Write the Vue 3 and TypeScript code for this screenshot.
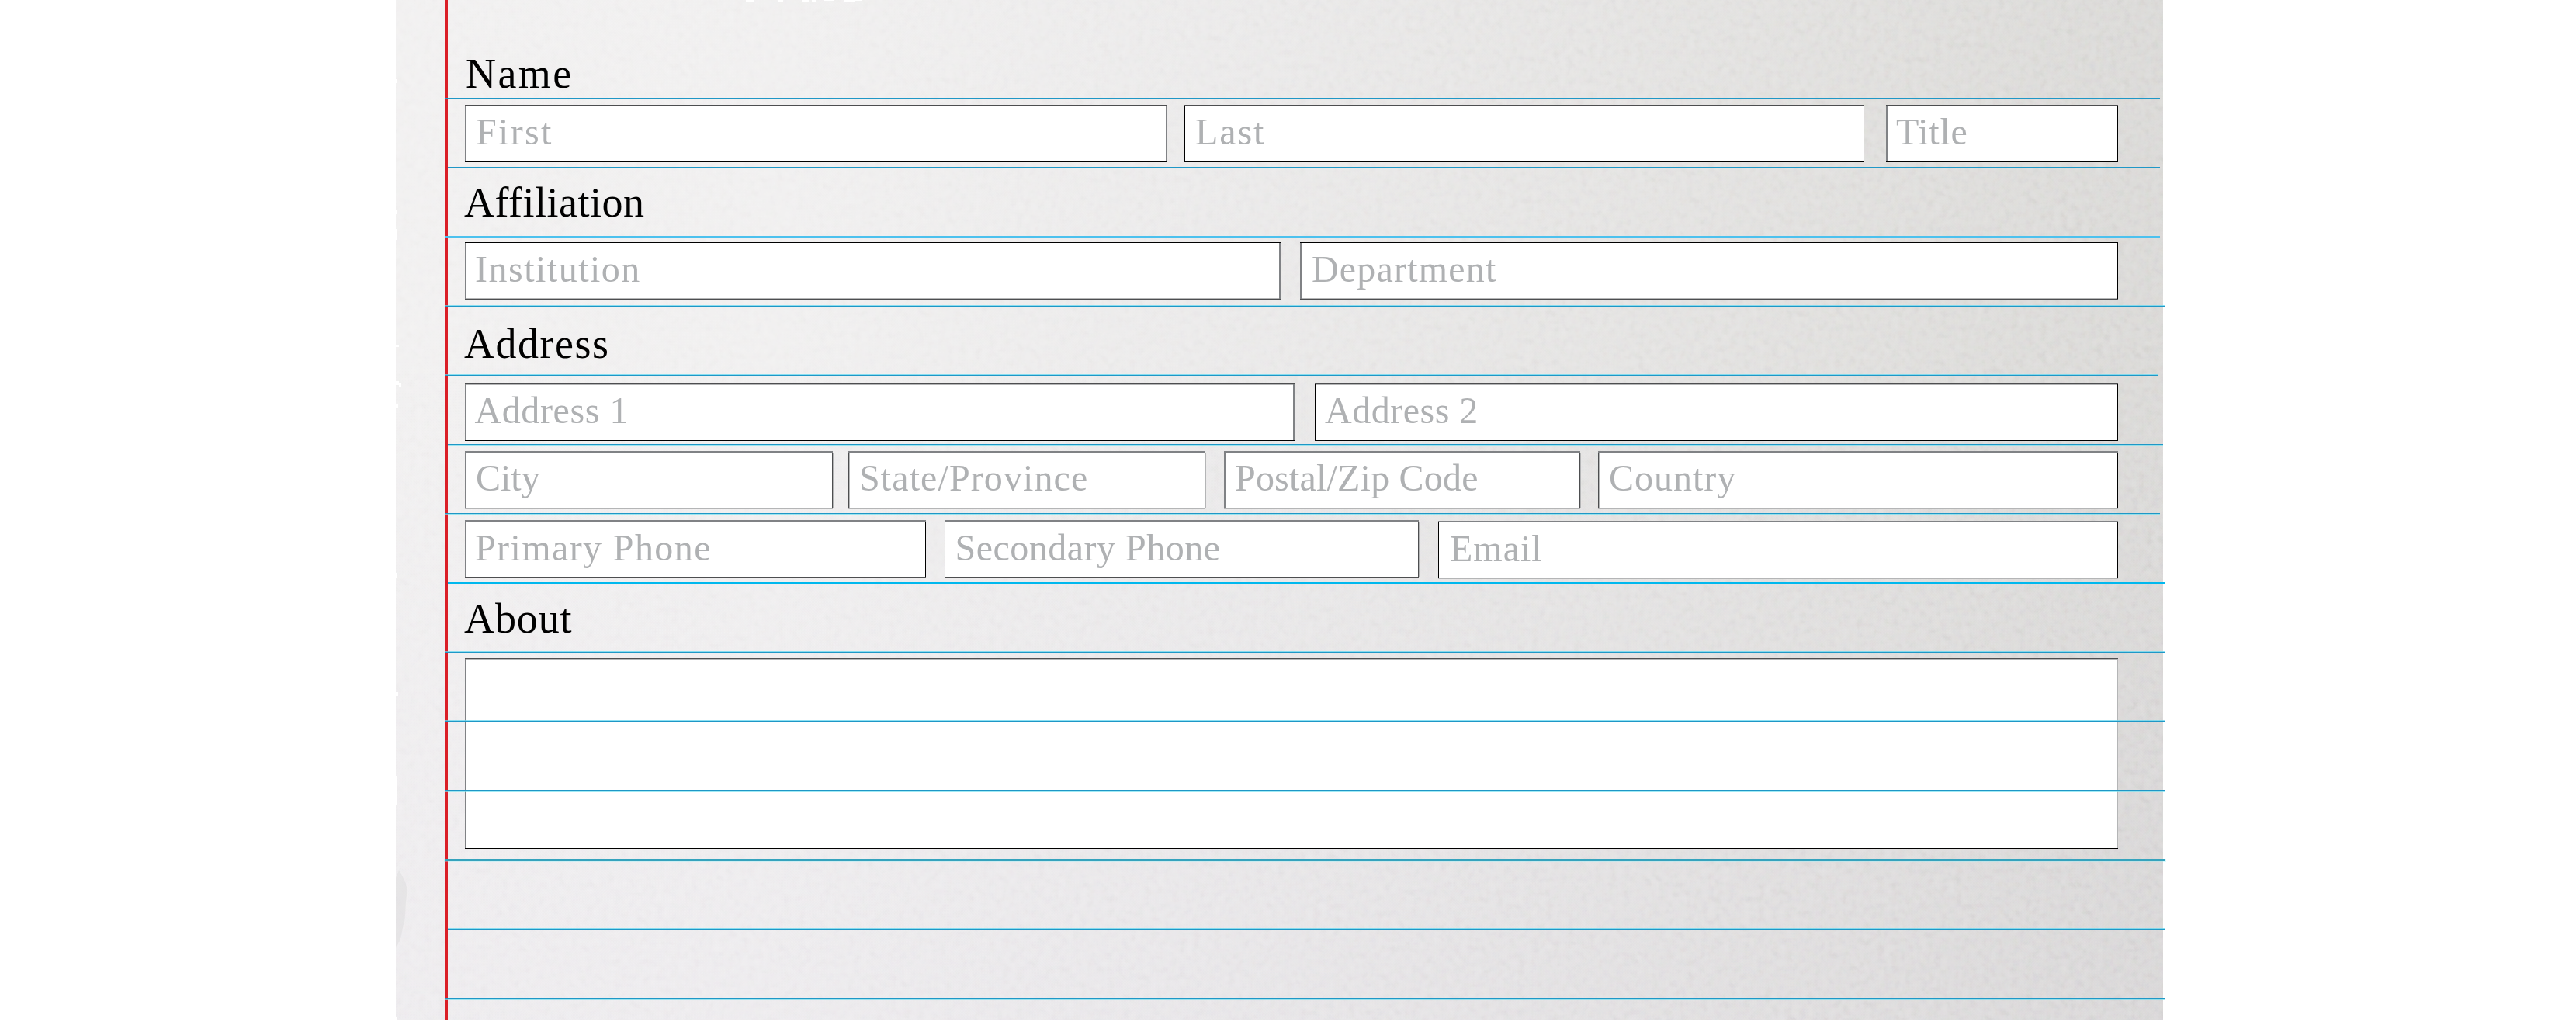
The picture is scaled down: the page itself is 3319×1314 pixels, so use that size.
<script setup lang="ts">
type Edge = 'thin' | 'soft' | 'mixed'

interface Field {
  label: string
  left: Edge
  right: Edge
  inset: number
  tracking: number
}

interface Row {
  name: string
  heading?: string
  headingTracking?: number
  fields: Field[]
}

const field = (label: string, left: Edge, right: Edge, inset: number, tracking: number): Field => ({
  label,
  left,
  right,
  inset,
  tracking,
})

const rows: Row[] = [
  {
    name: 'person',
    heading: 'Name',
    headingTracking: 2.4,
    fields: [
      field('First', 'soft', 'soft', 12, 2.3),
      field('Last', 'thin', 'thin', 13, 1.9),
      field('Title', 'soft', 'thin', 11, 0.7),
    ],
  },
  {
    name: 'affiliation',
    heading: 'Affiliation',
    headingTracking: 0.5,
    fields: [
      field('Institution', 'soft', 'soft', 11, 1.5),
      field('Department', 'soft', 'thin', 13, 1.2),
    ],
  },
  {
    name: 'street',
    heading: 'Address',
    headingTracking: 1.5,
    fields: [
      field('Address 1', 'soft', 'soft', 10.5, 0.6),
      field('Address 2', 'thin', 'thin', 12, 0.5),
    ],
  },
  {
    name: 'region',
    fields: [
      field('City', 'soft', 'mixed', 12, 0),
      field('State/Province', 'mixed', 'mixed', 13, 1.1),
      field('Postal/Zip Code', 'soft', 'mixed', 12, 0.2),
      field('Country', 'mixed', 'thin', 13, 1),
    ],
  },
  {
    name: 'contact',
    fields: [
      field('Primary Phone', 'soft', 'thin', 11, 1.4),
      field('Secondary Phone', 'thin', 'mixed', 12.5, 0.5),
      field('Email', 'thin', 'thin', 14, 1),
    ],
  },
]

interface Rule {
  y: number
  x: number
  end: number
  kind: string
}

const rules: Rule[] = [
  { y: 126, x: 573, end: 2783, kind: 'dark-light' },
  { y: 215, x: 577, end: 2783, kind: 'dark-light' },
  { y: 304, x: 573, end: 2783, kind: 'sky' },
  { y: 393, x: 573, end: 2790, kind: 'light-dark' },
  { y: 482, x: 573, end: 2781, kind: 'light-dark' },
  { y: 572, x: 577, end: 2787, kind: 'dark-light' },
  { y: 661, x: 573, end: 2783, kind: 'dark-light' },
  { y: 750, x: 577, end: 2790, kind: 'bright' },
  { y: 839, x: 573, end: 2790, kind: 'light-dark' },
  { y: 928, x: 573, end: 2790, kind: 'light-dark' },
  { y: 1018, x: 573, end: 2790, kind: 'dark-light' },
  { y: 1107, x: 573, end: 2790, kind: 'teal' },
  { y: 1196, x: 577, end: 2790, kind: 'light-dark' },
  { y: 1286, x: 573, end: 2790, kind: 'dark-light' },
]
</script>

<template>
  <main class="page">
    <div class="sheet">
      <svg class="grain" width="2277" height="1314" aria-hidden="true">
        <filter id="grain" x="0" y="0" width="100%" height="100%" color-interpolation-filters="sRGB">
          <feTurbulence type="fractalNoise" baseFrequency="0.11" numOctaves="4" seed="21" />
          <feColorMatrix
            values="1 0.5 0.5 0 -0.5  0.5 1 0.5 0 -0.5  0.5 0.5 1 0 -0.5  0 0 0 0 1"
          />
        </filter>
        <rect width="2277" height="1314" filter="url(#grain)" />
      </svg>
      <svg class="wear" width="2277" height="1314" aria-hidden="true">
        <path
          d="M451 0h10v2h-10zM493 0h6v3h-6zM523 0h9v3h-9zM536 0h5v2h-5zM552 0h12v1h-12zM578 0h22v1h-8v2h-5v-1h-9zM0 102h2v5H0zM0 270h1v6H0zM0 295h2v14H0zM0 444h4v3H0zM0 491h4v3h3v4H4v-2H0zM0 520h3v5H0zM0 738h2v6H0zM0 891h3v5H0zM0 1000h2v37H0zM0 1310h2v4H0z"
          fill="#fff"
        />
        <path d="M4 1121c4 7 9 14 11 27c-3 13-2 27-4 40c-4 9-2 21-11 32v-89z" fill="#cfcfd1" opacity="0.3" />
      </svg>
      <div class="margin"></div>

      <form class="form" @submit.prevent>
        <template v-for="row in rows" :key="row.name">
          <h2
            v-if="row.heading"
            :class="['heading', `heading-${row.name}`]"
            :style="{ letterSpacing: `${row.headingTracking}px` }"
          >
            {{ row.heading }}
          </h2>
          <div :class="['row', `row-${row.name}`]">
            <div v-for="item in row.fields" :key="item.label" class="field">
              <span :class="['side', 'side-left', item.left]"></span>
              <span
                class="hint"
                :style="{ paddingLeft: `${item.inset}px`, letterSpacing: `${item.tracking}px` }"
                >{{ item.label }}</span
              >
              <span :class="['side', 'side-right', item.right]"></span>
            </div>
          </div>
        </template>
        <h2 class="heading heading-about">About</h2>
        <div class="row row-about">
          <div class="field">
            <span class="side side-left soft"></span>
            <span class="side side-right mixed"></span>
          </div>
        </div>
      </form>
    </div>

    <div
      v-for="rule in rules"
      :key="rule.y"
      :class="['rule', rule.kind]"
      :style="{ top: `${rule.y}px`, left: `${rule.x}px`, width: `${rule.end - rule.x}px` }"
    ></div>
  </main>
</template>

<style>
body {
  background: #fff;
}
</style>

<style scoped>
.page {
  position: relative;
  width: 3319px;
  height: 1314px;
  overflow: hidden;
  background: #fff;
  font-family: 'Liberation Serif', 'Times New Roman', serif;
}

.sheet {
  position: relative;
  display: flex;
  width: 2277px;
  height: 1314px;
  margin-left: 510px;
  isolation: isolate;
  background:
    linear-gradient(180deg, rgba(220, 214, 226, 0) 35%, rgba(214, 206, 226, 0.12) 100%),
    linear-gradient(92deg, #f2f1f1 0%, #f1f0f0 22%, #ecebeb 45%, #e6e5e4 66%, #dfdedc 88%, #dbdad8 100%);
}

.grain,
.wear {
  position: absolute;
  top: 0;
  left: 0;
}

.grain {
  mix-blend-mode: soft-light;
  opacity: 0.24;
}

.margin {
  position: relative;
  flex: none;
  width: 4px;
  margin-left: 63px;
  background: #da1f27;
}

.form {
  position: relative;
  width: 2130px;
  margin-left: 22px;
}

.heading {
  height: 60px;
  margin: 0;
  color: #000;
  font-size: 54px;
  font-weight: 400;
  line-height: 60px;
  text-indent: -1px;
  white-space: nowrap;
}

.heading-person {
  margin-top: 65px;
  margin-bottom: 10px;
  text-indent: 1px;
}

.heading-affiliation {
  margin-top: 22px;
  margin-bottom: 21px;
}

.heading-street {
  margin-top: 27px;
  margin-bottom: 21px;
}

.heading-about {
  margin-top: 23px;
  margin-bottom: 21px;
  letter-spacing: 0.9px;
}

.row {
  display: grid;
  height: 74px;
}

.row-person {
  grid-template-columns: 905px 876px 299px;
  justify-content: start;
  column-gap: 22px;
}

.row-person .field:nth-child(3) {
  margin-left: 6px;
  margin-right: -6px;
}

.row-affiliation {
  grid-template-columns: 1051px 1054px;
  column-gap: 25px;
}

.row-street {
  grid-template-columns: 1069px 1035px;
  column-gap: 26px;
}

.row-region {
  grid-template-columns: 474px 464px 462px 670px;
  column-gap: 20px;
  margin-top: 13px;
}

.row-region .field:nth-child(2) {
  margin-right: 4px;
}

.row-region .field:nth-child(3) {
  margin-right: 3px;
}

.row-contact {
  grid-template-columns: 594px 610px 876px;
  column-gap: 25px;
  margin-top: 15px;
}

.row-contact .field:nth-child(2) {
  margin-left: -1px;
}

.row-contact .field:nth-child(3) {
  position: relative;
  top: 1px;
}

.row-about {
  grid-template-columns: 2130px;
  height: 246px;
}

.field {
  display: flex;
  background: #fff;
  border-top: 1px solid #4d4e50;
  border-bottom: 1px solid #000;
  box-shadow: inset 0 1px #b4b5b6;
}

.row-affiliation .field {
  border-top-color: #000;
  border-bottom-color: #4d4e50;
  box-shadow: inset 0 -1px #b4b5b6;
}

.row-region .field,
.row-contact .field {
  border-top: 2px solid #808285;
  border-bottom-color: #4d4e50;
  box-shadow: 0 1px #b4b5b6;
}

.side {
  flex: none;
  width: 1px;
  background: #000;
}

.side.soft {
  width: 2px;
  background: #808285;
}

.side.mixed {
  background: #4d4e50;
  box-shadow: 1px 0 #b4b5b6;
}

.side-right {
  margin-left: auto;
}

.row-about .side-right {
  margin-right: 1px;
}

.hint {
  color: #afb1b3;
  font-size: 48px;
  line-height: 68px;
  white-space: nowrap;
}

.row-region .hint {
  line-height: 66px;
}

.rule {
  position: absolute;
  height: 2px;
}

.rule.dark-light {
  background: linear-gradient(#1f97c6 50%, rgba(120, 225, 240, 0.7) 50%);
}

.rule.light-dark {
  background: linear-gradient(rgba(100, 215, 240, 0.75) 50%, #1f97c6 50%);
}

.rule.sky {
  background: #4cc1ee;
}

.rule.bright {
  background: #00b8ee;
}

.rule.teal {
  background: #35a3bd;
  box-shadow: 0 0 0 1px rgba(150, 240, 250, 0.35);
}
</style>
